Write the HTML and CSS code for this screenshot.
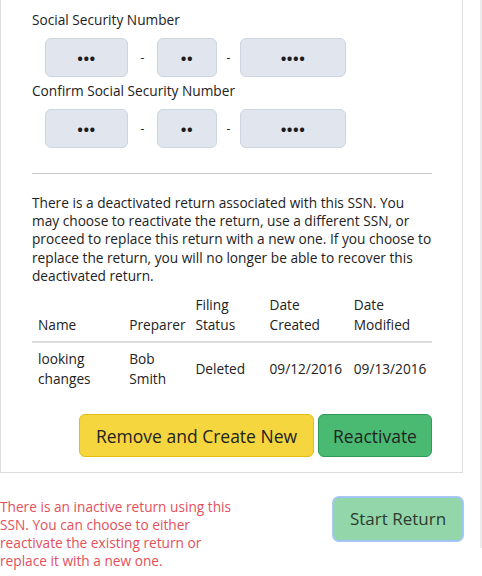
FILE: index.html
```html
<!DOCTYPE html>
<html>
<head>
<meta charset="utf-8">
<link rel="stylesheet" href="styles.css">
</head>
<body>
<div class="page">
  <div class="main">
    <div class="card">
      <div class="field">
        <div class="label">Social Security Number</div>
        <div class="ssn-row">
          <div class="box b1">&bull;&bull;&bull;</div>
          <span class="dash d1">-</span>
          <div class="box b2">&bull;&bull;</div>
          <span class="dash d2">-</span>
          <div class="box b3">&bull;&bull;&bull;&bull;</div>
        </div>
      </div>
      <div class="field">
        <div class="label">Confirm Social Security Number</div>
        <div class="ssn-row">
          <div class="box b1">&bull;&bull;&bull;</div>
          <span class="dash d1">-</span>
          <div class="box b2">&bull;&bull;</div>
          <span class="dash d2">-</span>
          <div class="box b3">&bull;&bull;&bull;&bull;</div>
        </div>
      </div>
      <hr class="divider">
      <p class="notice">There is a deactivated return associated with this SSN. You may choose to reactivate the return, use a different SSN, or proceed to replace this return with a new one. If you choose to replace the return, you will no longer be able to recover this deactivated return.</p>
      <table class="returns">
        <thead>
          <tr>
            <th class="c1">Name</th>
            <th class="c2">Preparer</th>
            <th class="c3">Filing Status</th>
            <th class="c4">Date Created</th>
            <th class="c5">Date Modified</th>
          </tr>
        </thead>
        <tbody>
          <tr>
            <td>looking changes</td>
            <td>Bob Smith</td>
            <td>Deleted</td>
            <td>09/12/2016</td>
            <td>09/13/2016</td>
          </tr>
        </tbody>
      </table>
      <div class="actions">
        <button class="btn btn-yellow">Remove and Create New</button>
        <button class="btn btn-green">Reactivate</button>
      </div>
    </div>
    <div class="footer">
      <p class="error">There is an inactive return using this SSN. You can choose to either reactivate the existing return or replace it with a new one.</p>
      <button class="btn btn-start">Start Return</button>
    </div>
  </div>
  <div class="scrollbar"></div>
</div>
</body>
</html>
```
FILE: styles.css
```css
* { box-sizing: border-box; }
html, body { margin: 0; padding: 0; background: #fff; }
body {
  font-family: "Open Sans", "Noto Sans", sans-serif;
  font-size: 13.7px;
  color: #222;
}
.page {
  display: flex;
  width: 482px;
  height: 576px;
  overflow: hidden;
}
.main {
  width: 463px;
}
.scrollbar {
  margin-left: 17px;
  width: 2px;
  height: 548px;
  background: #ececec;
}
.card {
  border: 1px solid #dcdcdc;
  border-top: 0;
  padding: 10px 30px 15px 31px;
}
.label {
  line-height: 20px;
}
.ssn-row {
  display: flex;
  align-items: center;
  margin: 8px 0 0 13px;
}
.field + .field { margin-top: 4px; }
.box {
  height: 39px;
  background: #e1e5ee;
  border: 1px solid #cdd4e2;
  border-radius: 6px;
  display: flex;
  align-items: center;
  justify-content: center;
  font-size: 15px;
  font-weight: bold;
  letter-spacing: 0.5px;
  color: #1c1c1c;
}
.b1 { width: 83px; }
.b2 { width: 60px; }
.b3 { width: 106px; }
.dash { text-align: center; font-size: 12px; }
.d1 { width: 29px; }
.d2 { width: 23px; }
.divider {
  border: 0;
  border-top: 1px solid #c6c6c6;
  margin: 25px 0 0;
}
.notice {
  margin: 20px 0 0;
  line-height: 18.2px;
}
.returns {
  width: 100%;
  table-layout: fixed;
  border-collapse: collapse;
  margin-top: 4px;
  line-height: 20px;
}
.returns th {
  font-weight: normal;
  text-align: left;
  vertical-align: bottom;
  padding: 6px;
  border-bottom: 2px solid #dcdcdc;
}
.returns td {
  vertical-align: middle;
  padding: 6px;
  white-space: normal;
}
.c1 { width: 91px; }
.c2 { width: 66px; }
.c3 { width: 74px; }
.c4 { width: 84px; }
.c5 { width: 84px; }
.actions {
  display: flex;
  justify-content: flex-end;
  gap: 4px;
  margin-top: 19px;
}
.btn {
  font-family: inherit;
  font-size: 17.5px;
  line-height: 22px;
  padding: 9px 10px;
  border-radius: 6px;
  color: #222;
  cursor: pointer;
}
.btn-yellow {
  width: 235px;
  height: 43px;
  background: #f5d63e;
  border: 1px solid #e3bd12;
}
.btn-green {
  width: 114px;
  height: 43px;
  background: #4aba72;
  border: 1px solid #2f9a57;
}
.footer {
  display: flex;
  justify-content: space-between;
  align-items: flex-start;
  margin-top: 24px;
}
.error {
  margin: 0;
  width: 235px;
  color: #e4505a;
  line-height: 18px;
  padding-top: 1px;
}
.btn-start {
  width: 130px;
  height: 44px;
  font-size: 17px;
  background: #93d6a9;
  border: 1px solid #9dc4f4;
  box-shadow: 0 0 0 1px #a8c8f6;
  color: #2b3b30;
}
```
